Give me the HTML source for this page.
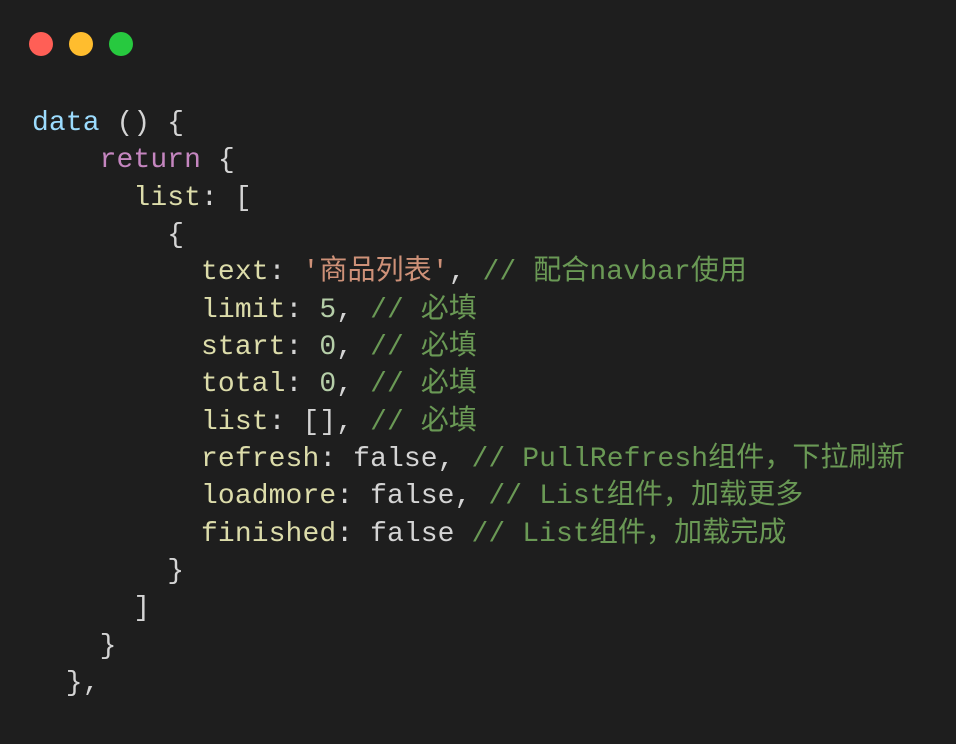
<!DOCTYPE html>
<html><head><meta charset="utf-8"><style>
html,body{margin:0;padding:0;background:#1e1e1e;width:956px;height:744px;overflow:hidden}
.d{position:absolute;top:32px;width:24px;height:24px;border-radius:50%}
pre{position:absolute;left:32px;top:105px;margin:0;font-family:"Liberation Mono","Noto Sans CJK SC",monospace;font-size:28px;line-height:37.33px;color:#d4d4d4;letter-spacing:0.1px}
.v{color:#9cdcfe}.r{color:#c586c0}.k{color:#dcdcaa}.s{color:#ce9178}.c{color:#6a9955}.n{color:#b5cea8}
</style></head><body>
<div class="d" style="left:29px;background:#ff5f56"></div>
<div class="d" style="left:69px;background:#ffbd2e"></div>
<div class="d" style="left:109px;background:#27c93f"></div>
<pre><span class="v">data</span> () {
    <span class="r">return</span> {
      <span class="k">list</span>: [
        {
          <span class="k">text</span>: <span class="s">'商品列表'</span>, <span class="c">// 配合navbar使用</span>
          <span class="k">limit</span>: <span class="n">5</span>, <span class="c">// 必填</span>
          <span class="k">start</span>: <span class="n">0</span>, <span class="c">// 必填</span>
          <span class="k">total</span>: <span class="n">0</span>, <span class="c">// 必填</span>
          <span class="k">list</span>: [], <span class="c">// 必填</span>
          <span class="k">refresh</span>: false, <span class="c">// PullRefresh组件，下拉刷新</span>
          <span class="k">loadmore</span>: false, <span class="c">// List组件，加载更多</span>
          <span class="k">finished</span>: false <span class="c">// List组件，加载完成</span>
        }
      ]
    }
  },</pre>
</body></html>
